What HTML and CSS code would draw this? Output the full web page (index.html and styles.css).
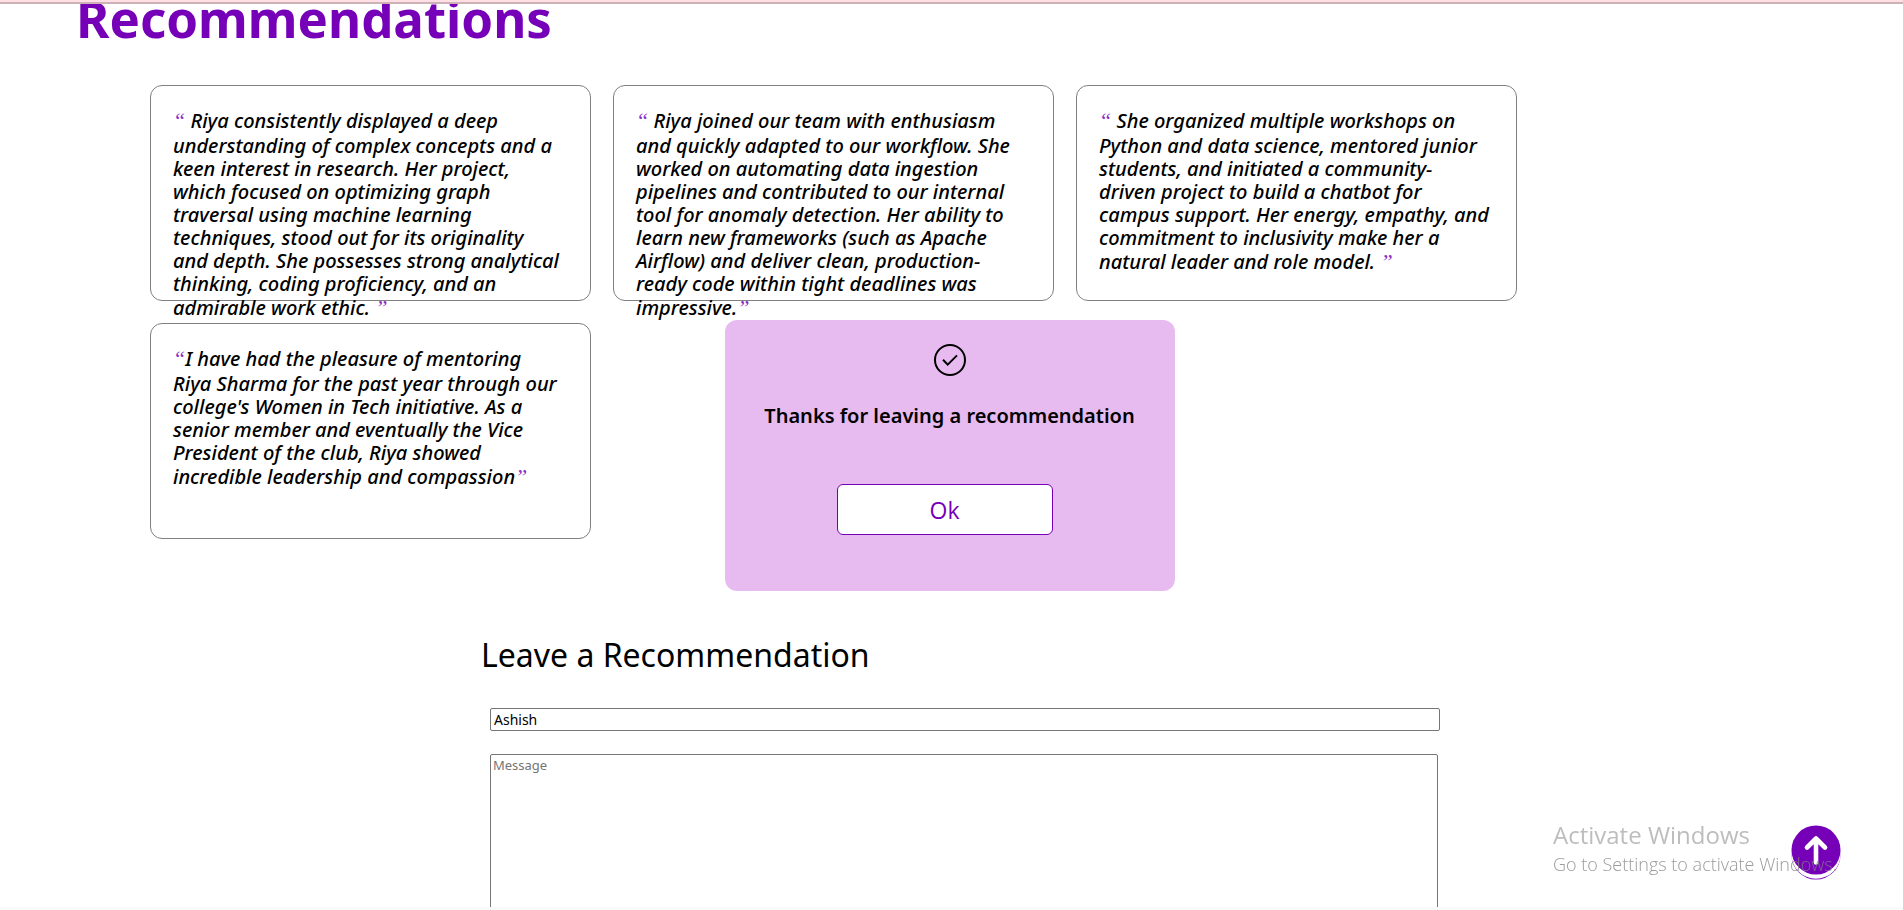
FILE: index.html
```html
<!DOCTYPE html>
<html lang="en">
<head>
<meta charset="utf-8">
<title>Recommendations</title>
<link rel="stylesheet" href="styles.css">
</head>
<body>
<header class="topbar"></header>
<main class="page">
  <section class="recommendations">
    <h1 class="title">Recommendations</h1>
    <div class="cards">
      <blockquote class="card"><span class="quote">“</span> Riya consistently displayed a deep<br>understanding of complex concepts and a<br>keen interest in research. Her project,<br>which focused on optimizing graph<br>traversal using machine learning<br>techniques, stood out for its originality<br>and depth. She possesses strong analytical<br>thinking, coding proficiency, and an<br>admirable work ethic. <span class="quote">”</span></blockquote>
      <blockquote class="card"><span class="quote">“</span> Riya joined our team with enthusiasm<br>and quickly adapted to our workflow. She<br>worked on automating data ingestion<br>pipelines and contributed to our internal<br>tool for anomaly detection. Her ability to<br>learn new frameworks (such as Apache<br>Airflow) and deliver clean, production-<br>ready code within tight deadlines was<br>impressive.<span class="quote">”</span></blockquote>
      <blockquote class="card"><span class="quote">“</span> She organized multiple workshops on<br>Python and data science, mentored junior<br>students, and initiated a community-<br>driven project to build a chatbot for<br>campus support. Her energy, empathy, and<br>commitment to inclusivity make her a<br>natural leader and role model. <span class="quote">”</span></blockquote>
      <blockquote class="card"><span class="quote">“</span>I have had the pleasure of mentoring<br>Riya Sharma for the past year through our<br>college's Women in Tech initiative. As a<br>senior member and eventually the Vice<br>President of the club, Riya showed<br>incredible leadership and compassion<span class="quote">”</span></blockquote>
    </div>
  </section>
  <form class="form">
    <h2 class="form-title">Leave a Recommendation</h2>
    <input class="field" type="text" value="Ashish" aria-label="Name">
    <textarea class="message" placeholder="Message" aria-label="Message"></textarea>
  </form>
</main>
<div class="popup" role="dialog" aria-labelledby="popup-text">
  <svg class="check" viewBox="0 0 32 32" aria-hidden="true"><circle cx="16" cy="16" r="15"/><path d="M9 15.800 L13.700 20.600 L23 11.400"/></svg>
  <p class="popup-text" id="popup-text">Thanks for leaving a recommendation</p>
  <button class="ok" type="button">Ok</button>
</div>
<a class="to-top" href="#" aria-label="Back to top">
  <svg viewBox="0 0 50 56" aria-hidden="true">
    <circle cx="25" cy="30" r="24.500" fill="#7500b8"/>
    <circle cx="25" cy="29" r="24.700" fill="#fff"/>
    <circle cx="25" cy="25" r="24.500" fill="#7500b8"/>
    <path d="M25 37.500V13.500M16 22.500L25 13.500L34 22.500" fill="none" stroke="#fff" stroke-width="4.600" stroke-linecap="round" stroke-linejoin="round"/>
  </svg>
</a>
<aside class="watermark">
  <p class="watermark-title">Activate Windows</p>
  <p class="watermark-text">Go to Settings to activate Windows.</p>
</aside>
<footer class="bottom-edge"></footer>
</body>
</html>
```
FILE: styles.css
```css
* { box-sizing: border-box; }
html, body { height: 100%; }
body {
  margin: 0;
  overflow: hidden;
  background: #fff;
  color: #000;
  font-family: "Noto Sans", sans-serif;
}
.topbar {
  position: fixed;
  inset: 0 0 auto;
  z-index: 2;
  height: 4px;
  background: #ffdee4;
  border-bottom: 2px solid #ccb2b7;
}
.bottom-edge {
  position: fixed;
  inset: auto 0 0;
  height: 3px;
  background: #fafafa;
}
.page { height: 100%; overflow: hidden; }
.title {
  margin: 0 0 48px 76px;
  color: #7500b8;
  font-size: 51px;
  line-height: 37px;
  font-weight: 700;
}
.cards {
  display: flex;
  flex-wrap: wrap;
  gap: 22px;
  margin: 0 380px 0 150px;
}
.card {
  flex: 0 0 441px;
  height: 216px;
  margin: 0;
  padding: 22px 8px 0 22px;
  border: 1px solid #808080;
  border-radius: 12px;
  font-size: 20px;
  line-height: 23px;
  font-style: italic;
  font-weight: 500;
}
.quote {
  color: #8a2cc4;
  font-family: "Liberation Serif", serif;
  font-size: 22px;
  line-height: 26px;
  font-weight: 400;
}
.form {
  display: flex;
  flex-direction: column;
  margin: 94px 463px 0 490px;
}
.form-title {
  margin: 0 0 32px -9px;
  font-size: 32px;
  line-height: 43px;
  font-weight: 400;
}
.field {
  height: 23px;
  padding: 1px 3px;
  border: 1px solid #767676;
  border-radius: 2px;
  font: 14px/19px "Noto Sans", sans-serif;
}
.message {
  height: 200px;
  margin: 23px 2px 0 0;
  padding: 1px 2px;
  border: 1px solid #767676;
  border-radius: 2px;
  resize: none;
  font: 13px/19px "Noto Sans", sans-serif;
}
.message::placeholder { color: #757575; }
.popup {
  position: fixed;
  top: 320px;
  left: calc(50% - 227px);
  display: flex;
  flex-direction: column;
  align-items: center;
  width: 450px;
  height: 271px;
  padding-top: 24px;
  border-radius: 12px;
  background: #e8bbf0;
}
.check {
  width: 32px;
  height: 32px;
  fill: none;
  stroke: #000;
  stroke-width: 2;
}
.popup-text {
  margin: 26px 0 0;
  font-size: 20px;
  line-height: 28px;
  font-weight: 600;
}
.ok {
  width: 216px;
  height: 51px;
  margin: 54px 10px 0 0;
  border: 1px solid #7500b8;
  border-radius: 6px;
  background: #fff;
  color: #7500b8;
  font: 400 23px/28px "Open Sans", sans-serif;
}
.to-top {
  position: fixed;
  right: 62px;
  bottom: 29px;
  width: 50px;
  height: 56px;
}
.to-top svg { display: block; }
.watermark {
  position: fixed;
  right: 64px;
  bottom: 33px;
  width: 286px;
  color: rgba(145, 145, 145, 0.6);
  font-family: "Open Sans", sans-serif;
  white-space: nowrap;
}
.watermark p { margin: 0; }
.watermark-title { font-size: 24px; line-height: 34px; }
.watermark-text {
  color: rgba(130, 130, 130, 0.8);
  font-size: 18px;
  line-height: 25px;
  font-weight: 300;
}
```
